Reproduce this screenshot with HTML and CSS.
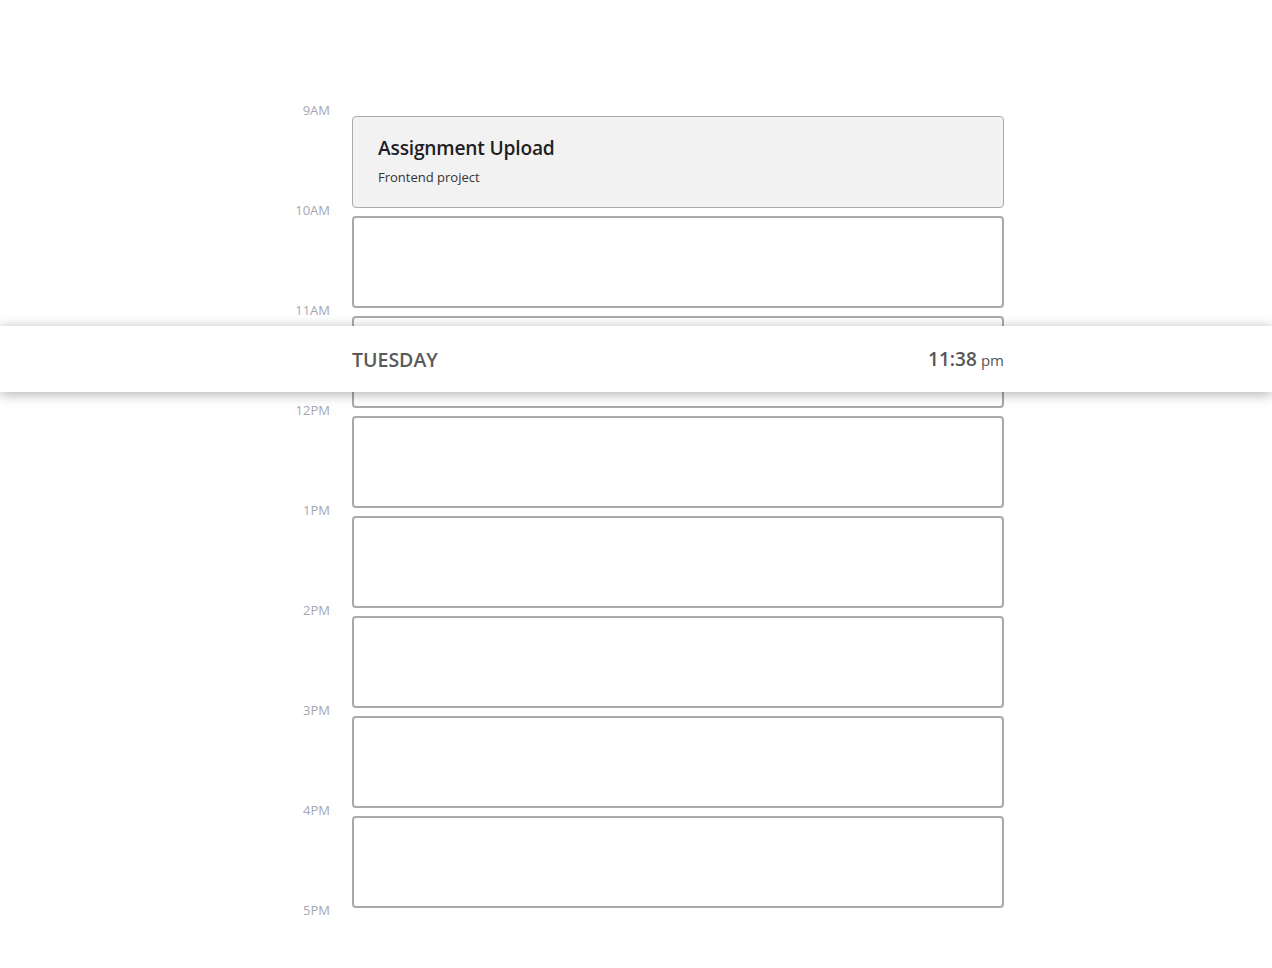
FILE: index.html
```html
<!DOCTYPE html>
<html>
<head>
<meta charset="utf-8">
<link rel="stylesheet" href="styles.css">
</head>
<body>
<div class="schedule">
  <div class="row"><div class="hour">9AM</div><div class="slot filled"><div class="title">Assignment Upload</div><div class="desc">Frontend project</div></div></div>
  <div class="row"><div class="hour">10AM</div><div class="slot"></div></div>
  <div class="row"><div class="hour">11AM</div><div class="slot"></div></div>
  <div class="row"><div class="hour">12PM</div><div class="slot"></div></div>
  <div class="row"><div class="hour">1PM</div><div class="slot"></div></div>
  <div class="row"><div class="hour">2PM</div><div class="slot"></div></div>
  <div class="row"><div class="hour">3PM</div><div class="slot"></div></div>
  <div class="row"><div class="hour">4PM</div><div class="slot"></div></div>
  <div class="row last"><div class="hour">5PM</div></div>
</div>
<header class="bar">
  <div class="bar-inner">
    <div class="day">TUESDAY</div>
    <div class="clock"><span class="hm">11:38</span> <span class="ampm">pm</span></div>
  </div>
</header>
</body>
</html>
```
FILE: styles.css
```css
html, body { margin: 0; padding: 0; background: #fff; }
body { font-family: "Open Sans", "Noto Sans", sans-serif; position: relative; min-height: 968px; }
.schedule { width: 736px; margin: 0 auto; padding-top: 116px; }
.row { display: flex; align-items: flex-start; height: 100px; }
.row.last { height: 40px; }
.hour { width: 62px; padding-right: 22px; text-align: right; font-size: 13px; line-height: 16px; color: #a4a7b4; margin-top: -14px; }
.slot { flex: 1; height: 88px; border: 2px solid #a9a9a9; border-radius: 4px; box-sizing: content-box; }
.slot.filled { height: 90px; border: 1px solid #ababab; background: #f2f2f2; padding: 0 0 0 25px; }
.title { font-family: "Open Sans", sans-serif; font-weight: 600; font-size: 19.2px; color: #1e1e24; margin-top: 18px; line-height: 26px; letter-spacing: -0.2px; }
.desc { font-size: 13px; color: #333; margin-top: 7px; line-height: 18px; }
.bar { position: absolute; left: 0; right: 0; top: 326px; height: 66px; background: #fff; box-shadow: 0 2px 12px rgba(0,0,0,0.32); }
.bar-inner { width: 652px; margin: 0 auto; padding-left: 84px; display: flex; justify-content: space-between; align-items: center; height: 66px; }
.day { font-size: 19.5px; font-weight: 600; color: #5a5a5a; }
.clock { color: #555; }
.hm { font-size: 19px; font-weight: 600; }
.ampm { font-size: 15px; }
```
